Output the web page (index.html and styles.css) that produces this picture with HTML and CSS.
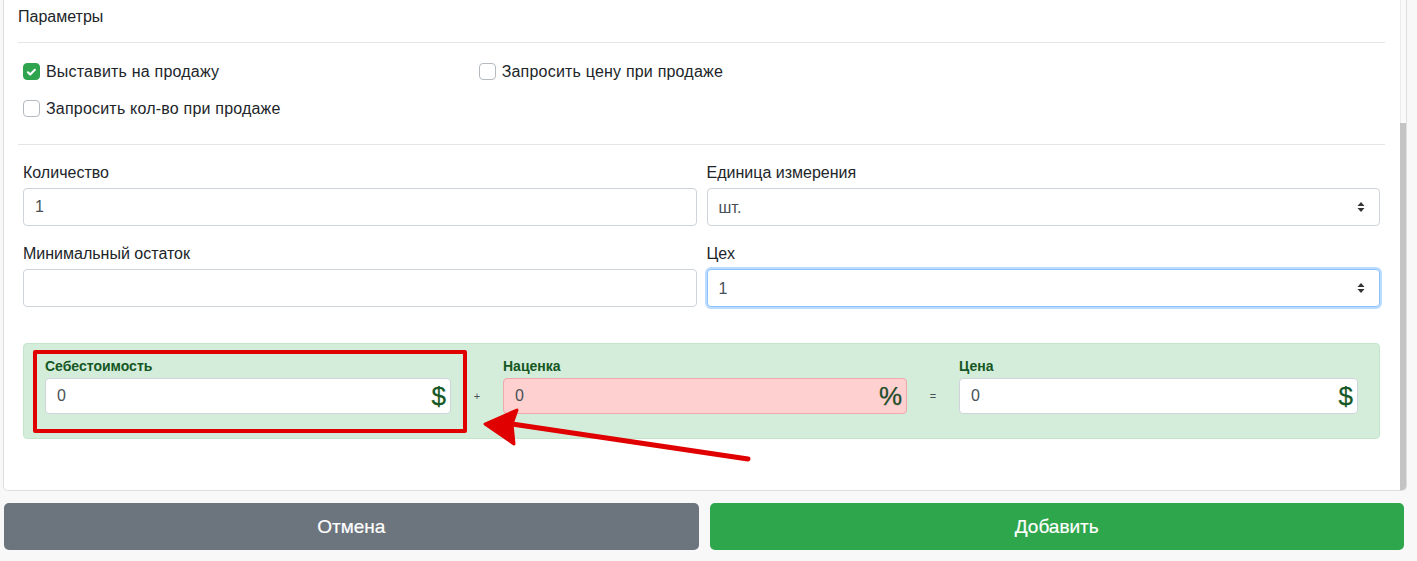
FILE: index.html
```html
<!DOCTYPE html>
<html lang="ru">
    <head>
        <meta name="viewport" content="width=device-width, initial-scale=1">
        <title>Новый товар</title>
        <link rel="stylesheet" href="styles.css">
    </head>
    <body>
        <div class="panel">
            <div class="panel-body">
                <div class="section-title">Параметры</div>
                <div class="checks">
                    <label class="check"><span class="box checked"><svg viewBox="0 0 16 16" width="16" height="16"><path d="M4.2 8.3l2.4 2.4 5-5" fill="none" stroke="#fff" stroke-width="2.2" stroke-linecap="round" stroke-linejoin="round"/></svg></span>Выставить на продажу</label>
                    <label class="check"><span class="box"></span>Запросить цену при продаже</label>
                    <label class="check empty"></label>
                    <label class="check"><span class="box"></span>Запросить кол-во при продаже</label>
                </div>
                <div class="fields">
                    <div class="field">
                        <label for="qty">Количество</label>
                        <div class="control"><input id="qty" type="text" value="1"></div>
                    </div>
                    <div class="field">
                        <label for="unit">Единица измерения</label>
                        <div class="control">
                            <select id="unit"><option>шт.</option></select>
                            <svg class="caret" viewBox="0 0 8 12" width="8" height="12"><path d="M4 1L7.5 5H0.5z M4 11L0.5 7H7.5z" fill="#333"/></svg>
                        </div>
                    </div>
                    <div class="field">
                        <label for="minrest">Минимальный остаток</label>
                        <div class="control"><input id="minrest" type="text" value=""></div>
                    </div>
                    <div class="field">
                        <label for="shop">Цех</label>
                        <div class="control focused">
                            <select id="shop"><option>1</option></select>
                            <svg class="caret" viewBox="0 0 8 12" width="8" height="12"><path d="M4 1L7.5 5H0.5z M4 11L0.5 7H7.5z" fill="#333"/></svg>
                        </div>
                    </div>
                </div>
                <div class="pricing">
                    <div class="price-field">
                        <label>Себестоимость</label>
                        <div class="control small"><input type="text" value="0"><span class="suffix money">$</span></div>
                    </div>
                    <div class="op">+</div>
                    <div class="price-field">
                        <label>Наценка</label>
                        <div class="control small danger"><input type="text" value="0"><span class="suffix">%</span></div>
                    </div>
                    <div class="op">=</div>
                    <div class="price-field">
                        <label>Цена</label>
                        <div class="control small"><input type="text" value="0"><span class="suffix money">$</span></div>
                    </div>
                </div>
            </div>
            <div class="scrollbar">
                <div class="scroll-gap"></div>
                <div class="scroll-thumb"></div>
            </div>
        </div>
        <div class="footer">
            <button class="btn btn-grey">Отмена</button>
            <button class="btn btn-green">Добавить</button>
        </div>

        <!-- annotation from the screenshot -->
        <div class="mark-box"></div>
        <svg class="mark-arrow" width="1417" height="561" viewBox="0 0 1417 561">
            <path d="M748 459 L512 424" stroke="#e00000" stroke-width="5" stroke-linecap="round" fill="none"/>
            <path d="M485 424 L517 410 L512 424 L514 444 Z" fill="#e00000" stroke="#e00000" stroke-width="3" stroke-linejoin="round"/>
        </svg>
    </body>
</html>
```
FILE: styles.css
```css
body, html {
    padding: 0;
    margin: 0;
    background: #f8f8f8;
    font-family: "Liberation Sans", Arial, sans-serif;
    color: #212529;
}
* {
    box-sizing: border-box;
}
.panel {
    margin-left: 3px;
    width: 1404px;
    height: 491px;
    background: #fff;
    border: 1px solid #dedede;
    border-top: 0;
    border-radius: 0 0 5px 5px;
    display: flex;
    overflow: hidden;
}
.panel-body {
    flex: 1;
    padding: 0 15px 0 14px;
}
.scrollbar {
    width: 6px;
    display: flex;
    flex-direction: column;
    background: #fafafa;
    border-left: 1px solid #ececec;
}
.scroll-gap {
    height: 123px;
}
.scroll-thumb {
    flex: 1;
    background: #c4c4c4;
    margin-left: -1px;
}
.section-title {
    font-size: 16px;
    line-height: 22px;
    padding: 6px 0 14px;
    border-bottom: 1px solid #e5e5e5;
}
.checks {
    display: grid;
    grid-template-columns: repeat(3, 1fr);
    padding: 10px 0 17px;
    border-bottom: 1px solid #e5e5e5;
}
.check {
    display: flex;
    align-items: center;
    height: 37px;
    padding: 0 5px;
    font-size: 16px;
    letter-spacing: 0.2px;
    gap: 6px;
}
.box {
    width: 17px;
    height: 17px;
    border: 1px solid #b4bac0;
    border-radius: 4px;
    background: #fff;
    display: flex;
    align-items: center;
    justify-content: center;
}
.box.checked {
    background: #2ea44f;
    border-color: #2ea44f;
}
.fields {
    display: grid;
    grid-template-columns: 1fr 1fr;
    padding-top: 18px;
    row-gap: 18px;
}
.field {
    padding: 0 5px;
}
.field label {
    display: block;
    font-size: 16px;
    line-height: 20px;
    margin-bottom: 5px;
}
.control {
    display: flex;
    align-items: center;
    height: 38px;
    border: 1px solid #ced4da;
    border-radius: 4px;
    background: #fff;
    padding-right: 14px;
}
.control input, .control select {
    flex: 1;
    min-width: 0;
    height: 100%;
    border: 0;
    background: transparent;
    padding: 0 11px;
    font-family: inherit;
    font-size: 16px;
    color: #495057;
    outline: none;
    -webkit-appearance: none;
    appearance: none;
}
.control.focused {
    border-color: #8cc2fb;
    box-shadow: 0 0 0 2px #bcdcfd;
}
.pricing {
    margin: 36px 5px 0;
    height: 96px;
    background: #d4edda;
    border: 1px solid #c3e6cb;
    border-radius: 4px;
    padding: 14px 21px 0;
    display: grid;
    grid-template-columns: 406px 52px 404px 52px 1fr;
    align-items: end;
    align-content: start;
}
.price-field label {
    display: block;
    font-size: 14px;
    font-weight: bold;
    line-height: 16px;
    margin-bottom: 4px;
    color: #155724;
}
.control.small {
    height: 36px;
    padding-right: 4px;
}
.control.danger {
    background: #ffd0d0;
    border-color: #f0a8ac;
}
.suffix {
    font-size: 26px;
    -webkit-text-stroke: 0.25px currentColor;
    color: #1d4d29;
}
.money {
    color: #155724;
}
.op {
    height: 36px;
    line-height: 36px;
    text-align: center;
    font-size: 11px;
    color: #495057;
}
.footer {
    display: flex;
    gap: 11px;
    padding: 12px 13px 0 4px;
}
.btn {
    flex: 1;
    height: 47px;
    border: 0;
    border-radius: 5px;
    color: #fff;
    font-family: inherit;
    font-size: 19px;
    -webkit-text-stroke: 0.2px #fff;
}
.btn-grey {
    background: #6c757d;
}
.btn-green {
    background: #2ea64b;
}
.mark-box {
    position: absolute;
    left: 33px;
    top: 350px;
    width: 434px;
    height: 83px;
    border: 4px solid #e00000;
    border-radius: 2px;
}
.mark-arrow {
    position: absolute;
    left: 0;
    top: 0;
    pointer-events: none;
}
```
